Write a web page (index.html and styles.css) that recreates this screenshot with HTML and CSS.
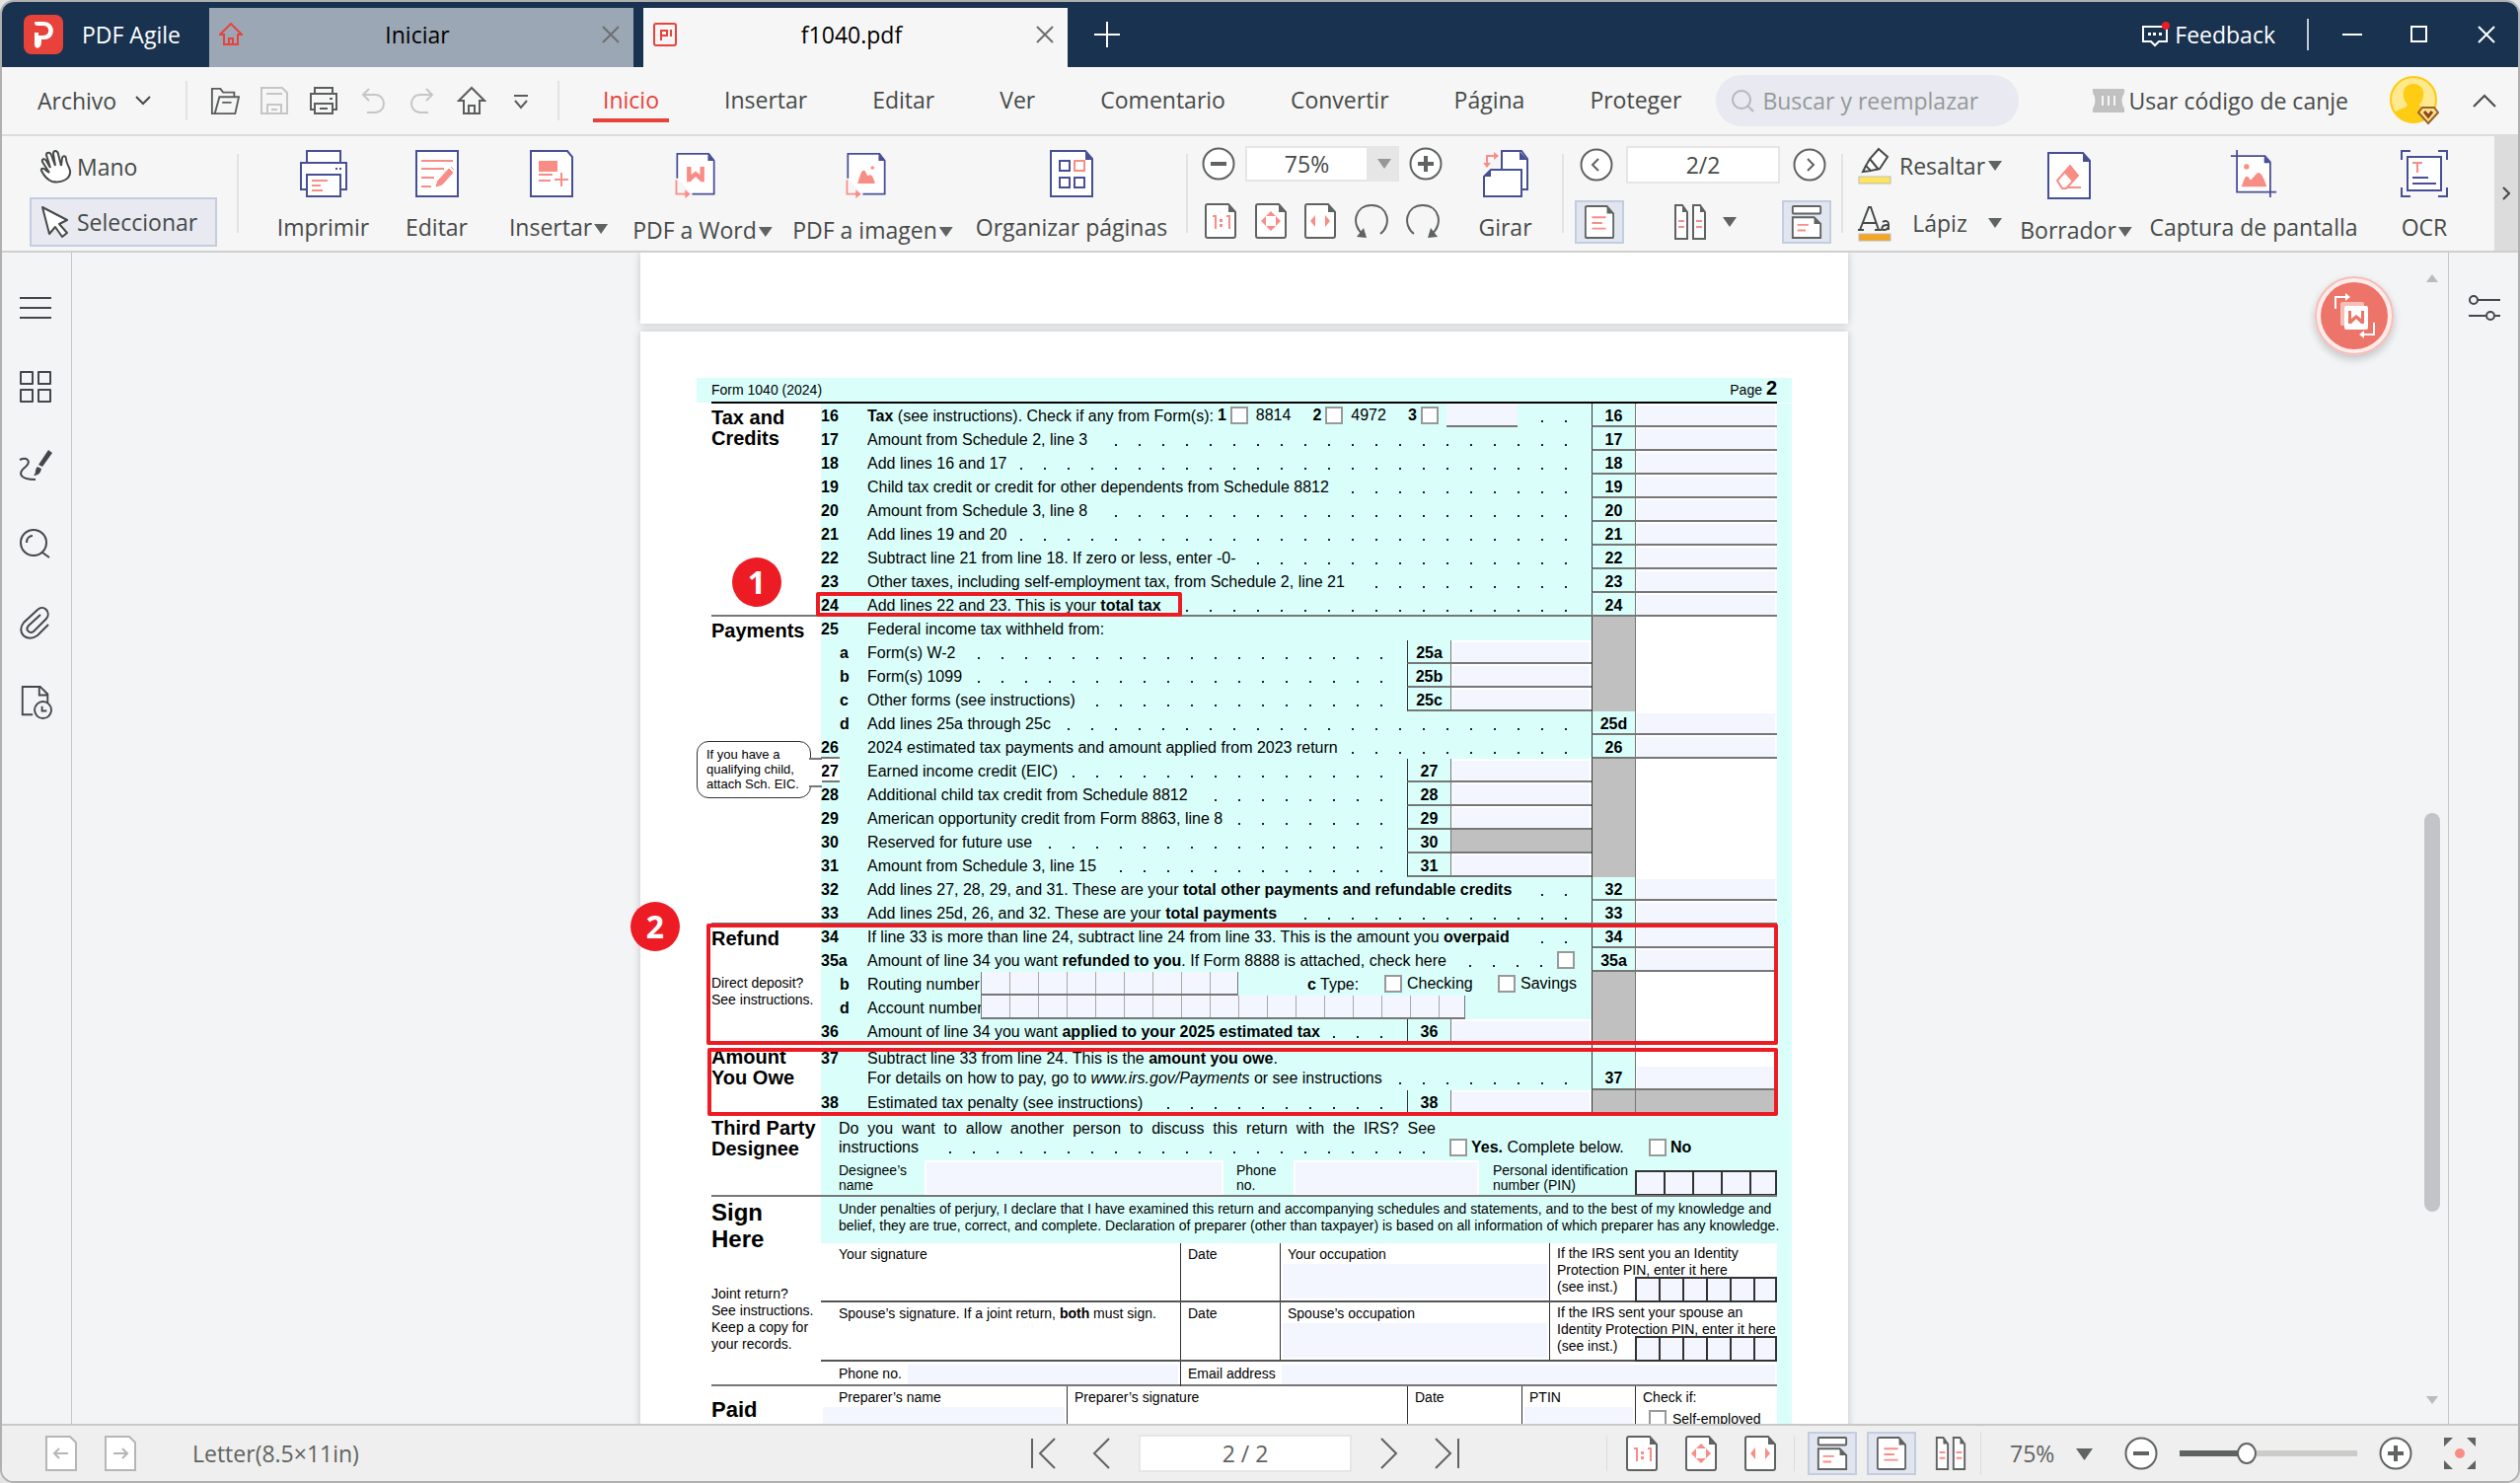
FILE: index.html
```html
<!DOCTYPE html>
<html lang="es">
<head>
  <meta charset="UTF-8">
  <title>PDF Agile - f1040.pdf</title>
  <meta name="viewport" content="width=device-width, initial-scale=1">
  <link rel="stylesheet" href="styles.css">
</head>
<body>
  <!-- icon set -->
  <svg class="sprite" aria-hidden="true">
    <symbol id="i-house" viewBox="0 0 30 30"><path d="M2 15 15 2l13 13h-5v13h-16V15zM12 28v-8h6v8" fill="none" stroke="currentColor" stroke-width="2"/></symbol>
    <symbol id="i-x" viewBox="0 0 18 18"><path d="M1 1l16 16M17 1 1 17" fill="none" stroke="currentColor" stroke-width="2"/></symbol>
    <symbol id="i-minus" viewBox="0 0 34 34"><circle cx="17" cy="17" r="15.500" fill="#fff" stroke="currentColor" stroke-width="2"/><path d="M9 17h16" stroke="currentColor" stroke-width="4"/></symbol>
    <symbol id="i-plus" viewBox="0 0 34 34"><circle cx="17" cy="17" r="15.500" fill="#fff" stroke="currentColor" stroke-width="2"/><path d="M9 17h16M17 9v16" stroke="currentColor" stroke-width="4"/></symbol>
    <symbol id="i-prev" viewBox="0 0 34 34"><circle cx="17" cy="17" r="15.500" fill="#fff" stroke="currentColor" stroke-width="2"/><path d="M19 11l-6 6 6 6" fill="none" stroke="currentColor" stroke-width="2"/></symbol>
    <symbol id="i-next" viewBox="0 0 34 34"><circle cx="17" cy="17" r="15.500" fill="#fff" stroke="currentColor" stroke-width="2"/><path d="M15 11l6 6-6 6" fill="none" stroke="currentColor" stroke-width="2"/></symbol>
    <symbol id="i-sheet" viewBox="0 0 32 36"><path d="M1 3q0-2 2-2h21l7 8v24q0 2-2 2H3q-2 0-2-2z" fill="#fff" stroke="currentColor" stroke-width="2"/><path d="M24 1v8h7z" fill="currentColor"/></symbol>
    <symbol id="i-actual" viewBox="0 0 32 36"><use href="#i-sheet"/><path d="M8 13h3v13M22 13h3v13" fill="none" stroke="#f98d86" stroke-width="2"/><path d="M15 16h3v3h-3zM15 21h3v3h-3z" fill="#f98d86"/></symbol>
    <symbol id="i-fitpage" viewBox="0 0 32 36"><use href="#i-sheet"/><path d="M16 8l5 5H11zM16 28l5-5H11zM6 18l5-5v10zM26 18l-5-5v10z" fill="#f98d86"/></symbol>
    <symbol id="i-fitwidth" viewBox="0 0 32 36"><use href="#i-sheet"/><path d="M6 18l5-6v12zM26 18l-5-6v12z" fill="#f98d86"/></symbol>
    <symbol id="i-single" viewBox="0 0 32 36"><use href="#i-sheet"/><path d="M8 13h15M8 19h11M8 25h15" stroke="#f98d86" stroke-width="2"/></symbol>
    <symbol id="i-facing" viewBox="0 0 32 36"><path d="M1 1h7l5 7v27H1zM19 1h7l5 7v27H19z" fill="#fff" stroke="currentColor" stroke-width="2"/><path d="M8 1v7h5zM26 1v7h5z" fill="currentColor"/><path d="M4 17h6M4 23h6M22 17h6M22 23h6" stroke="#f98d86" stroke-width="2"/></symbol>
    <symbol id="i-scroll" viewBox="0 0 32 36"><rect x="1" y="1" width="30" height="8" rx="1" fill="#fff" stroke="currentColor" stroke-width="2"/><path d="M1 13h23l7 7v15H1z" fill="#fff" stroke="currentColor" stroke-width="2"/><path d="M24 13v7h7z" fill="currentColor"/><path d="M6 21h12M6 27h9" stroke="#f98d86" stroke-width="2"/></symbol>
    <symbol id="i-rotate" viewBox="0 0 34 36"><path d="M8 31C-4 22 0 2 17 2s21 20 9 29" fill="none" stroke="currentColor" stroke-width="2"/><path d="M9 25l3 10-10-1z" fill="currentColor"/></symbol>
    <symbol id="i-bluepage" viewBox="0 0 46 48"><path d="M2 1h35l7 8v38H2z" fill="#fff" stroke="#474f95" stroke-width="2"/><path d="M37 1v9h7z" fill="#474f95"/></symbol>
    <symbol id="i-topage" viewBox="0 0 48 54"><path d="M3 30V2h36l6 8v38H20" fill="#fff" stroke="#474f95" stroke-width="2"/><path d="M38 2v8h7z" fill="#474f95"/><path d="M2 32v16h12" fill="none" stroke="#f98d86" stroke-width="2"/><path d="M12 43l6 5-6 5z" fill="#f98d86"/></symbol>
  </svg>

  <div class="window">
    <header class="titlebar">
      <svg class="logo" viewBox="0 0 40 40"><rect width="40" height="40" rx="8" fill="#e8433b"/><path d="M12 7h8c13 0 13 18 1 18h-3v2c0 9-8 8-7 2V18h4v3h5c7 0 7-10 0-10h-6c-3 0-4-4-2-4z" fill="#fff"/></svg>
      <span class="brand">PDF Agile</span>
      <div class="tab tab-home">
        <svg class="tab-icon" viewBox="0 0 24 24"><path d="M1 12 12 1l11 11h-4v10H5V12zM10 22v-6h4v6" fill="none" stroke="#e8433b" stroke-width="2"/></svg>
        <span class="tab-title">Iniciar</span>
        <button class="plain tab-close" aria-label="Cerrar Iniciar"><svg><use href="#i-x"/></svg></button>
      </div>
      <div class="tab tab-active">
        <svg class="tab-icon" viewBox="0 0 24 24"><rect x="1" y="1" width="22" height="22" rx="2" fill="none" stroke="#e8433b" stroke-width="2"/><path d="M8 18V8h6v5H9M18 7v7" fill="none" stroke="#e8433b" stroke-width="2"/></svg>
        <span class="tab-title">f1040.pdf</span>
        <button class="plain tab-close" aria-label="Cerrar f1040.pdf"><svg><use href="#i-x"/></svg></button>
      </div>
      <button class="plain new-tab" aria-label="Nueva pestaña"><svg viewBox="0 0 26 26"><path d="M0 13h26M13 0v26" stroke="#fff" stroke-width="2"/></svg></button>
      <div class="window-tools">
        <button class="plain feedback"><svg viewBox="0 0 28 26"><path d="M1 5h24v15h-8l-4 4-4-4H1z" fill="none" stroke="#fff" stroke-width="2"/><path d="M6 11h3v3H6zM11 11h3v3h-3zM17 11h3v3h-3z" fill="#fff"/><circle cx="24" cy="4" r="4" fill="#ee1c25"/></svg>Feedback</button>
        <span class="bar"></span>
        <button class="plain" aria-label="Minimizar"><svg viewBox="0 0 20 18"><path d="M0 9h20" stroke="#fff" stroke-width="2"/></svg></button>
        <button class="plain" aria-label="Maximizar"><svg viewBox="0 0 20 18"><rect x="2" y="1" width="15" height="15" fill="none" stroke="#fff" stroke-width="2"/></svg></button>
        <button class="plain" aria-label="Cerrar"><svg viewBox="0 0 18 18"><use href="#i-x"/></svg></button>
      </div>
    </header>

    <nav class="menubar">
      <button class="plain file-menu">Archivo <svg viewBox="0 0 16 10"><path d="M1 1l7 7 7-7" fill="none" stroke="currentColor" stroke-width="2"/></svg></button>
      <span class="divider"></span>
      <div class="quick">
        <button class="plain" aria-label="Abrir"><svg viewBox="0 0 32 30"><path d="M5 29H2V2h9l3 4h12v5M5 29l5-18h21l-4 18zM13 17h10" fill="none" stroke="currentColor" stroke-width="2"/></svg></button>
        <button class="plain off" aria-label="Guardar"><svg viewBox="0 0 30 30"><path d="M2 2h21l5 5v21H2zM7 8h16M8 28v-9h14v9M12 24h6" fill="none" stroke="currentColor" stroke-width="2"/></svg></button>
        <button class="plain" aria-label="Imprimir"><svg viewBox="0 0 30 30"><path d="M6 8V2h18v6M6 24H2V8h26v16h-4M6 18h18v10H6zM11 23h8M21 13h3" fill="none" stroke="currentColor" stroke-width="2"/></svg></button>
        <button class="plain off" aria-label="Deshacer"><svg viewBox="0 0 30 30"><path d="M11 3 5 9l6 6M5 9h12c12 0 12 18 0 18H9" fill="none" stroke="currentColor" stroke-width="2"/></svg></button>
        <button class="plain off" aria-label="Rehacer"><svg viewBox="0 0 30 30"><path d="M19 3l6 6-6 6M25 9H13C1 9 1 27 13 27h8" fill="none" stroke="currentColor" stroke-width="2"/></svg></button>
        <button class="plain" aria-label="Inicio"><svg><use href="#i-house"/></svg></button>
        <button class="plain" aria-label="Más"><svg viewBox="0 0 30 30"><path d="M8 10h14M9 15l6 7 6-7" fill="none" stroke="currentColor" stroke-width="2"/></svg></button>
      </div>
      <span class="divider"></span>
      <div class="menus">
        <a class="current" href="#inicio">Inicio</a>
        <a href="#insertar">Insertar</a>
        <a href="#editar">Editar</a>
        <a href="#ver">Ver</a>
        <a href="#comentario">Comentario</a>
        <a href="#convertir">Convertir</a>
        <a href="#pagina">Página</a>
        <a href="#proteger">Proteger</a>
      </div>
      <label class="search"><svg viewBox="0 0 24 24"><circle cx="11" cy="11" r="9" fill="none" stroke="currentColor" stroke-width="2"/><path d="M17 17l6 6" stroke="currentColor" stroke-width="2"/></svg><input type="text" placeholder="Buscar y reemplazar" aria-label="Buscar y reemplazar"></label>
      <div class="account">
        <button class="plain redeem"><svg viewBox="0 0 32 24"><path d="M0 0h32v4q-5 8 0 16v4H0v-4q5-8 0-16z" fill="#c1c1c1"/><path d="M10 7v10M16 7v10M22 7v10" stroke="#f6f6f6" stroke-width="2"/></svg>Usar código de canje</button>
        <button class="plain avatar" aria-label="Cuenta"><svg viewBox="0 0 50 50"><circle cx="24" cy="24" r="23" fill="#ffe98f" stroke="#ffca0a" stroke-width="2"/><path d="M24 8c13 0 12 16 6 21 1 4 9 4 13 8-10 14-29 14-38 0 4-4 12-4 13-8-6-5-7-21 6-21z" fill="#ffcc14"/><path d="M33 32h12l4 5-10 11-10-11z" fill="#ffdf8a" stroke="#9c6128" stroke-width="2"/><path d="M35 36l4 5 4-5" fill="none" stroke="#8b4a16" stroke-width="3"/></svg></button>
        <button class="plain collapse" aria-label="Contraer"><svg viewBox="0 0 24 14"><path d="M1 13 12 2l11 11" fill="none" stroke="currentColor" stroke-width="2"/></svg></button>
      </div>
    </nav>

    <section class="ribbon" aria-label="Herramientas">
      <div class="modes">
        <button class="mode"><svg viewBox="0 0 34 34"><path d="M13 32c-6-2-9-7-11-11-1-3 3-3 5 0l3 2L3 12c-1-3 2-4 4-1l4 7L7 5c0-3 4-3 5 0l4 11-2-12c0-4 4-4 5 0l3 12 1-8c1-3 4-2 4 1 0 5 3 7 4 12 1 8-8 13-18 11z" fill="#fff" stroke="currentColor" stroke-width="2"/></svg>Mano</button>
        <button class="mode selected"><svg viewBox="0 0 34 34"><path d="M3 2l25 13-8 4 8 9-5 4-7-10-6 7z" fill="#fff" stroke="currentColor" stroke-width="2" stroke-linejoin="round"/></svg>Seleccionar</button>
      </div>
      <span class="divider"></span>
      <button class="tool w-115"><svg viewBox="0 0 48 48"><path d="M7 13V1h34v12M8 40H1V13h46v27h-6" fill="#fff" stroke="#474f95" stroke-width="2"/><path d="M7 25h34v22H7z" fill="#fff" stroke="#474f95" stroke-width="2"/><path d="M36 19h2M40 19h2" stroke="#474f95" stroke-width="2"/><path d="M12 31h16M12 36h9M12 41h11" stroke="#f98d86" stroke-width="2"/></svg><span>Imprimir</span></button>
      <button class="tool w-115"><svg viewBox="0 0 46 48"><rect x="2" y="1" width="42" height="46" fill="#fff" stroke="#474f95" stroke-width="2"/><path d="M7 11h32M7 19h23M7 28h13M7 37h10" stroke="#f98d86" stroke-width="2"/><path d="M22 37l2-6 11-12 4 4-11 12zM37 17l3 3" fill="#f98d86" stroke="#f98d86"/></svg><span>Editar</span></button>
      <button class="tool menu w-132"><svg viewBox="0 0 46 48"><path d="M2 1h37l5 6v40H2z" fill="#fff" stroke="#474f95" stroke-width="2"/><path d="M10 11h19v11H10z" fill="#f98d86"/><path d="M10 25h14M10 31h12M26 30h14M33 23v14" stroke="#f98d86" stroke-width="2"/></svg><span>Insertar<i class="caret"></i></span></button>
      <button class="tool menu low w-160"><svg viewBox="0 0 48 54"><use href="#i-topage"/><path d="M14 17h5v9l5-4 5 4v-9h5v17h-4l-6-6-6 6h-4z" fill="#f98d86"/></svg><span>PDF a Word<i class="caret"></i></span></button>
      <button class="tool menu low w-185"><svg viewBox="0 0 48 54"><use href="#i-topage"/><path d="M14 36c2-6 4-15 7-15 3 0 3 6 5 6 4-3 6 2 8 9z" fill="#f98d86"/><circle cx="31" cy="18" r="2" fill="#f98d86"/></svg><span>PDF a imagen<i class="caret"></i></span></button>
      <button class="tool w-218"><svg viewBox="0 0 46 48"><use href="#i-bluepage"/><path d="M11 11h10v10H11zM11 28h10v10H11zM26 28h10v10H26z" fill="none" stroke="#474f95" stroke-width="2"/><path d="M26 11h10v10H26z" fill="none" stroke="#f98d86" stroke-width="2"/></svg><span>Organizar páginas</span></button>
      <span class="divider"></span>
      <div class="stack zoom">
        <div class="line">
          <button class="plain" aria-label="Alejar"><svg class="round"><use href="#i-minus"/></svg></button>
          <span class="pick"><select aria-label="Zoom"><option>75%</option><option>100%</option></select><i class="caret"></i></span>
          <button class="plain" aria-label="Acercar"><svg class="round"><use href="#i-plus"/></svg></button>
        </div>
        <div class="line">
          <button class="plain" aria-label="Tamaño real"><svg class="doc"><use href="#i-actual"/></svg></button>
          <button class="plain" aria-label="Ajustar página"><svg class="doc"><use href="#i-fitpage"/></svg></button>
          <button class="plain" aria-label="Ajustar ancho"><svg class="doc"><use href="#i-fitwidth"/></svg></button>
          <button class="plain" aria-label="Girar a la izquierda"><svg class="turn"><use href="#i-rotate"/></svg></button>
          <button class="plain" aria-label="Girar a la derecha"><svg class="turn mirror"><use href="#i-rotate"/></svg></button>
        </div>
      </div>
      <button class="tool w-115"><svg viewBox="0 0 48 48"><path d="M20 1h20l6 8v31H20z" fill="#fff" stroke="#474f95" stroke-width="2"/><path d="M38 1v9h8z" fill="#474f95"/><path d="M9 20h31v27H2V27z" fill="#fff" stroke="#474f95" stroke-width="2"/><path d="M9 20v7H2z" fill="#474f95"/><path d="M5 15V6h8" fill="none" stroke="#f98d86" stroke-width="2"/><path d="M12 2l5 4-5 4zM1 13l4 5 4-5z" fill="#f98d86"/></svg><span>Girar</span></button>
      <span class="divider"></span>
      <div class="stack pager">
        <div class="line">
          <button class="plain" aria-label="Página anterior"><svg class="round"><use href="#i-prev"/></svg></button>
          <input class="page-box" type="text" value="2/2" aria-label="Página">
          <button class="plain" aria-label="Página siguiente"><svg class="round"><use href="#i-next"/></svg></button>
        </div>
        <div class="line">
          <button class="toggle on" aria-label="Una página"><svg class="doc"><use href="#i-single"/></svg></button>
          <button class="plain facing" aria-label="Dos páginas"><svg class="doc"><use href="#i-facing"/></svg><i class="caret"></i></button>
          <button class="toggle on" aria-label="Desplazamiento"><svg class="doc"><use href="#i-scroll"/></svg></button>
        </div>
      </div>
      <span class="divider"></span>
      <div class="stack pens">
        <button class="pen"><svg viewBox="0 0 34 38"><path d="M21 2l9 8-8 12-9 2-5-5 4-7zM12 12l9 11M8 19l-3 6 8-1" fill="#fff" stroke="currentColor" stroke-width="2"/><rect x="1" y="30" width="32" height="7" fill="#ffe45c" stroke="#bbb"/></svg><span>Resaltar</span><i class="caret"></i></button>
        <button class="pen"><svg viewBox="0 0 34 38"><path d="M2 26 11 3h2l8 23M5 19h13M0 26h6M17 26h7M25 18c3-2 6-1 6 2v6M31 21c-8-1-8 6-4 5 2 0 4-2 4-4" fill="none" stroke="currentColor" stroke-width="2"/><rect x="1" y="30" width="32" height="7" fill="#f5a623" stroke="#bbb"/></svg><span>Lápiz</span><i class="caret"></i></button>
      </div>
      <button class="tool menu low w-132"><svg viewBox="0 0 46 48"><use href="#i-bluepage"/><path d="M11 29 24 14l8 10-12 13h-4z" fill="#fff" stroke="#f98d86" stroke-width="2"/><path d="M24 14l8 10-6 6-8-9z" fill="#f98d86"/><path d="M20 36h15" stroke="#f98d86" stroke-width="2"/></svg><span>Borrador<i class="caret"></i></span></button>
      <button class="tool capture w-218"><svg viewBox="0 0 52 54"><path d="M7 7h32l6 7v34H7z" fill="#fff"/><path d="M0 7h39l6 7v40M7 0v48h45" fill="none" stroke="#474f95" stroke-width="2"/><path d="M38 7v8h7z" fill="#474f95"/><circle cx="18" cy="19" r="3" fill="#f98d86"/><path d="M12 42c2-5 4-12 6-12 3 0 3 4 5 4 3-3 6-8 9-8 4 1 7 10 9 16z" fill="#f98d86"/></svg><span>Captura de pantalla</span></button>
      <button class="tool ocr"><svg viewBox="0 0 48 48"><path d="M1 10V1h9M38 1h9v9M47 38v9h-9M10 47H1v-9" fill="none" stroke="#474f95" stroke-width="2"/><rect x="7" y="7" width="34" height="34" fill="#fff" stroke="#474f95" stroke-width="2"/><path d="M12 13h10M17 13v10" stroke="#f98d86" stroke-width="2"/><path d="M12 28h16M12 34h24" stroke="#474f95" stroke-width="2"/></svg><span>OCR</span></button>
      <button class="plain more" aria-label="Más herramientas"><svg viewBox="0 0 8 14"><path d="M1 1l6 6-6 6" fill="none" stroke="currentColor" stroke-width="2"/></svg></button>
    </section>

    <main class="workspace">
      <aside class="rail">
        <button class="plain" aria-label="Marcadores"><svg viewBox="0 0 34 34"><path d="M1 7h32M1 17h32M1 27h32" stroke="currentColor" stroke-width="2"/></svg></button>
        <button class="plain" aria-label="Miniaturas"><svg viewBox="0 0 34 34"><path d="M2 2h12v12H2zM20 2h12v12H20zM2 20h12v12H2zM20 20h12v12H20z" fill="none" stroke="currentColor" stroke-width="2" stroke-linejoin="round"/></svg></button>
        <button class="plain" aria-label="Firmas"><svg viewBox="0 0 34 34"><path d="M1 11c9-4 11 3 6 7-8 6-7 13 10 13" fill="none" stroke="currentColor" stroke-width="2"/><path d="M30 1l4 3-10 14-4-2zM19 18l4 2c-1 5-4 7-8 7 3-2 1-7 4-9z" fill="currentColor"/></svg></button>
        <button class="plain" aria-label="Buscar"><svg viewBox="0 0 34 34"><circle cx="15" cy="15" r="13" fill="none" stroke="currentColor" stroke-width="2"/><path d="M24 25l7 5M8 15c0-5 3-7 6-7" fill="none" stroke="currentColor" stroke-width="2"/></svg></button>
        <button class="plain" aria-label="Adjuntos"><svg viewBox="0 0 34 34"><path d="M30 18 19 29C8 37-3 26 5 16L19 3c7-6 14 3 9 9L15 25c-4 3-9-2-5-6l12-11" fill="none" stroke="currentColor" stroke-width="2"/></svg></button>
        <button class="plain" aria-label="Historial"><svg viewBox="0 0 34 36"><path d="M14 31H3V1h19l8 8v9M21 1v9h9" fill="none" stroke="currentColor" stroke-width="2"/><circle cx="25" cy="26" r="9" fill="none" stroke="currentColor" stroke-width="2"/><path d="M24 22v5h5" fill="none" stroke="currentColor" stroke-width="2"/></svg></button>
      </aside>

      <div class="viewer">
        <div class="pages">
          <div class="page page-end"></div>
          <article class="page sheet" lang="en">
            <div class="form">
              <div class="form-head"><span>Form 1040 (2024)</span><span>Page <b class="big">2</b></span></div>

              <section class="part">
                <h2>Tax and<br>Credits</h2>
                <div class="rows">
                  <div class="row"><span class="no">16</span><div class="desc"><span><b>Tax</b> (see instructions). Check if any from Form(s):</span><label class="tick"><b>1</b><input type="checkbox">8814</label><label class="tick"><b>2</b><input type="checkbox">4972</label><label class="tick"><b>3</b><input type="checkbox"></label><input class="other" type="text" aria-label="Otro formulario"><span class="dots"></span></div><label class="box" for="l16">16</label><input class="amt" id="l16" type="text"></div>
                  <div class="row"><span class="no">17</span><div class="desc"><span>Amount from Schedule 2, line 3</span><span class="dots"></span></div><label class="box" for="l17">17</label><input class="amt" id="l17" type="text"></div>
                  <div class="row"><span class="no">18</span><div class="desc"><span>Add lines 16 and 17</span><span class="dots"></span></div><label class="box" for="l18">18</label><input class="amt" id="l18" type="text"></div>
                  <div class="row"><span class="no">19</span><div class="desc"><span>Child tax credit or credit for other dependents from Schedule 8812</span><span class="dots"></span></div><label class="box" for="l19">19</label><input class="amt" id="l19" type="text"></div>
                  <div class="row"><span class="no">20</span><div class="desc"><span>Amount from Schedule 3, line 8</span><span class="dots"></span></div><label class="box" for="l20">20</label><input class="amt" id="l20" type="text"></div>
                  <div class="row"><span class="no">21</span><div class="desc"><span>Add lines 19 and 20</span><span class="dots"></span></div><label class="box" for="l21">21</label><input class="amt" id="l21" type="text"></div>
                  <div class="row"><span class="no">22</span><div class="desc"><span>Subtract line 21 from line 18. If zero or less, enter -0-</span><span class="dots"></span></div><label class="box" for="l22">22</label><input class="amt" id="l22" type="text"></div>
                  <div class="row"><span class="no">23</span><div class="desc"><span>Other taxes, including self-employment tax, from Schedule 2, line 21</span><span class="dots"></span></div><label class="box" for="l23">23</label><input class="amt" id="l23" type="text"></div>
                  <div class="row"><span class="no">24</span><div class="desc"><span>Add lines 22 and 23. This is your <b>total tax</b></span><span class="dots"></span></div><label class="box" for="l24">24</label><input class="amt" id="l24" type="text"></div>
                </div>
              </section>

              <section class="part">
                <div class="side">
                  <h2>Payments</h2>
                  <p class="callout">If you have a qualifying child, attach Sch. EIC.</p>
                </div>
                <div class="rows">
                  <div class="row"><span class="no">25</span><div class="desc">Federal income tax withheld from:</div><span class="box gray"></span><span class="amt blank"></span></div>
                  <div class="row"><span class="no sub">a</span><div class="desc"><span>Form(s) W-2</span><span class="dots"></span></div><label class="box" for="l25a">25a</label><input class="amt inner" id="l25a" type="text"><span class="box gray"></span><span class="amt blank"></span></div>
                  <div class="row"><span class="no sub">b</span><div class="desc"><span>Form(s) 1099</span><span class="dots"></span></div><label class="box" for="l25b">25b</label><input class="amt inner" id="l25b" type="text"><span class="box gray"></span><span class="amt blank"></span></div>
                  <div class="row"><span class="no sub">c</span><div class="desc"><span>Other forms (see instructions)</span><span class="dots"></span></div><label class="box" for="l25c">25c</label><input class="amt inner" id="l25c" type="text"><span class="box gray"></span><span class="amt blank"></span></div>
                  <div class="row"><span class="no sub">d</span><div class="desc"><span>Add lines 25a through 25c</span><span class="dots"></span></div><label class="box" for="l25d">25d</label><input class="amt" id="l25d" type="text"></div>
                  <div class="row"><span class="no">26</span><div class="desc"><span>2024 estimated tax payments and amount applied from 2023 return</span><span class="dots"></span></div><label class="box" for="l26">26</label><input class="amt" id="l26" type="text"></div>
                  <div class="row"><span class="no"><span class="tag">27</span></span><div class="desc"><span>Earned income credit (EIC)</span><span class="dots"></span></div><label class="box" for="l27">27</label><input class="amt inner" id="l27" type="text"><span class="box gray"></span><span class="amt blank"></span></div>
                  <div class="row"><span class="no">28</span><div class="desc"><span>Additional child tax credit from Schedule 8812</span><span class="dots"></span></div><label class="box" for="l28">28</label><input class="amt inner" id="l28" type="text"><span class="box gray"></span><span class="amt blank"></span></div>
                  <div class="row"><span class="no">29</span><div class="desc"><span>American opportunity credit from Form 8863, line 8</span><span class="dots"></span></div><label class="box" for="l29">29</label><input class="amt inner" id="l29" type="text"><span class="box gray"></span><span class="amt blank"></span></div>
                  <div class="row"><span class="no">30</span><div class="desc"><span>Reserved for future use</span><span class="dots"></span></div><span class="box">30</span><span class="amt inner reserved"></span><span class="box gray"></span><span class="amt blank"></span></div>
                  <div class="row"><span class="no">31</span><div class="desc"><span>Amount from Schedule 3, line 15</span><span class="dots"></span></div><label class="box" for="l31">31</label><input class="amt inner" id="l31" type="text"><span class="box gray"></span><span class="amt blank"></span></div>
                  <div class="row"><span class="no">32</span><div class="desc"><span>Add lines 27, 28, 29, and 31. These are your <b>total other payments and refundable credits</b></span><span class="dots"></span></div><label class="box" for="l32">32</label><input class="amt" id="l32" type="text"></div>
                  <div class="row"><span class="no">33</span><div class="desc"><span>Add lines 25d, 26, and 32. These are your <b>total payments</b></span><span class="dots"></span></div><label class="box" for="l33">33</label><input class="amt" id="l33" type="text"></div>
                </div>
              </section>

              <section class="part">
                <div class="side">
                  <h2>Refund</h2>
                  <p class="note deposit">Direct deposit?<br>See instructions.</p>
                </div>
                <div class="rows">
                  <div class="row"><span class="no">34</span><div class="desc"><span>If line 33 is more than line 24, subtract line 24 from line 33. This is the amount you <b>overpaid</b></span><span class="dots"></span></div><label class="box" for="l34">34</label><input class="amt" id="l34" type="text"></div>
                  <div class="row"><span class="no">35a</span><div class="desc"><label for="f8888">Amount of line 34 you want <b>refunded to you</b>. If Form 8888 is attached, check here</label><span class="dots short"></span><input class="last-check" type="checkbox" id="f8888"></div><label class="box" for="l35">35a</label><input class="amt" id="l35" type="text"></div>
                  <div class="row"><span class="no sub">b</span><div class="desc"><label class="bank" for="routing">Routing number</label><input class="comb comb-9" id="routing" type="text"><span class="type"><b>c</b> Type:</span><label class="kind"><input type="checkbox">Checking</label><label class="kind"><input type="checkbox">Savings</label></div><span class="box gray"></span><span class="amt blank"></span></div>
                  <div class="row"><span class="no sub">d</span><div class="desc"><label class="bank" for="account">Account number</label><input class="comb comb-17" id="account" type="text"></div><span class="box gray"></span><span class="amt blank"></span></div>
                  <div class="row"><span class="no">36</span><div class="desc"><span>Amount of line 34 you want <b>applied to your 2025 estimated tax</b></span><span class="dots"></span></div><label class="box" for="l36">36</label><input class="amt inner" id="l36" type="text"><span class="box gray"></span><span class="amt blank"></span></div>
                </div>
              </section>

              <section class="part">
                <h2>Amount<br>You Owe</h2>
                <div class="rows">
                  <div class="row tall"><span class="no">37</span><div class="desc two"><span>Subtract line 33 from line 24. This is the <b>amount you owe</b>.</span><div class="desc-line"><span>For details on how to pay, go to <em>www.irs.gov/Payments</em> or see instructions</span><span class="dots"></span></div></div><label class="box" for="l37">37</label><input class="amt" id="l37" type="text"></div>
                  <div class="row"><span class="no">38</span><div class="desc"><span>Estimated tax penalty (see instructions)</span><span class="dots"></span></div><label class="box" for="l38">38</label><input class="amt inner" id="l38" type="text"><span class="box gray"></span><span class="amt blank gray"></span></div>
                </div>
              </section>

              <section class="part">
                <h2>Third Party<br>Designee</h2>
                <div class="rows designee">
                  <p class="ask">Do you want to allow another person to discuss this return with the IRS? See</p>
                  <div class="answer"><span>instructions</span><span class="dots"></span><label class="yes"><input type="checkbox"><span><b>Yes.</b> Complete below.</span></label><label class="no-box"><input type="checkbox"><b>No</b></label></div>
                  <div class="contact">
                    <label for="dname">Designee’s name</label><input class="field" id="dname" type="text">
                    <label for="dphone">Phone<br>no.</label><input class="field" id="dphone" type="text">
                    <label for="dpin">Personal identification number (PIN)</label><input class="pin pin-5" id="dpin" type="text">
                  </div>
                </div>
              </section>

              <section class="part">
                <div class="side">
                  <h2 class="large">Sign<br>Here</h2>
                  <p class="note joint">Joint return?<br>See instructions.<br>Keep a copy for<br>your records.</p>
                </div>
                <div class="rows">
                  <p class="oath">Under penalties of perjury, I declare that I have examined this return and accompanying schedules and statements, and to the best of my knowledge and<br>belief, they are true, correct, and complete. Declaration of preparer (other than taxpayer) is based on all information of which preparer has any knowledge.</p>
                  <div class="sign">
                    <div class="cell first">Your signature</div>
                    <div class="cell">Date</div>
                    <div class="cell"><label for="occ1">Your occupation</label><input class="fill" id="occ1" type="text"></div>
                    <div class="cell ip"><label for="ip1">If the IRS sent you an Identity<br>Protection PIN, enter it here<br>(see inst.)</label><input class="pin pin-6" id="ip1" type="text"></div>
                  </div>
                  <div class="sign">
                    <div class="cell first"><span>Spouse’s signature. If a joint return, <b>both</b> must sign.</span></div>
                    <div class="cell">Date</div>
                    <div class="cell"><label for="occ2">Spouse’s occupation</label><input class="fill" id="occ2" type="text"></div>
                    <div class="cell ip"><label for="ip2">If the IRS sent your spouse an<br>Identity Protection PIN, enter it here<br>(see inst.)</label><input class="pin pin-6" id="ip2" type="text"></div>
                  </div>
                  <div class="reach">
                    <div class="cell first"><label for="ph">Phone no.</label><input id="ph" type="text"></div>
                    <div class="cell"><label for="em">Email address</label><input id="em" type="text"></div>
                  </div>
                </div>
              </section>

              <section class="part">
                <h2 class="paid">Paid</h2>
                <div class="rows preparer">
                  <div class="cell first"><label for="pn">Preparer’s name</label><input class="fill" id="pn" type="text"></div>
                  <div class="cell">Preparer’s signature</div>
                  <div class="cell">Date</div>
                  <div class="cell"><label for="ptin">PTIN</label><input class="fill" id="ptin" type="text"></div>
                  <div class="cell">Check if:<label class="self"><input type="checkbox">Self-employed</label></div>
                </div>
              </section>
            </div>

            <!-- review marks drawn over the form -->
            <span class="mark mark-total"></span>
            <span class="mark mark-refund"></span>
            <span class="mark mark-owe"></span>
            <span class="badge badge-1">1</span>
            <span class="badge badge-2">2</span>
          </article>
        </div>
        <div class="scrollbar">
          <i class="arrow up"></i>
          <i class="thumb"></i>
          <i class="arrow down"></i>
        </div>
        <button class="plain convert" aria-label="Convertir a Word"><svg viewBox="0 0 80 80"><circle cx="40" cy="40" r="39" fill="#fdeceb" stroke="#f8bdb7" stroke-width="2"/><circle cx="40" cy="40" r="34" fill="#ed7469"/><path d="M21 33V21h10M60 47v12H50" fill="none" stroke="#fff" stroke-width="2"/><path d="M31 17l5 4-5 4zM50 55l-5 4 5 4z" fill="#fff"/><rect x="26" y="26" width="24" height="24" rx="2" fill="#f8bdb7"/><rect x="30" y="30" width="24" height="24" rx="2" fill="#fff"/><path d="M34 35h3v8l5-4 5 4v-8h3v13h-3l-5-5-5 5h-3z" fill="#ed7469"/></svg></button>
      </div>

      <aside class="rail rail-right">
        <button class="plain" aria-label="Propiedades"><svg viewBox="0 0 34 34"><path d="M10 9h23M1 25h17M28 25h5" stroke="currentColor" stroke-width="2"/><circle cx="6" cy="9" r="4" fill="none" stroke="currentColor" stroke-width="2"/><circle cx="23" cy="25" r="4" fill="none" stroke="currentColor" stroke-width="2"/></svg></button>
      </aside>
    </main>

    <footer class="statusbar">
      <button class="plain off" aria-label="Vista anterior"><svg class="doc" viewBox="0 0 32 36"><path d="M1 1h24l6 6v28H1z" fill="#fff" stroke="currentColor" stroke-width="2"/><path d="M9 18h14M14 13l-5 5 5 5" fill="none" stroke="currentColor" stroke-width="2"/></svg></button>
      <button class="plain off next-view" aria-label="Vista siguiente"><svg class="doc" viewBox="0 0 32 36"><path d="M1 1h24l6 6v28H1z" fill="#fff" stroke="currentColor" stroke-width="2"/><path d="M9 18h14M18 13l5 5-5 5" fill="none" stroke="currentColor" stroke-width="2"/></svg></button>
      <span class="paper">Letter(8.5×11in)</span>
      <div class="page-nav">
        <button class="plain" aria-label="Primera página"><svg viewBox="0 0 26 32"><path d="M1 1v30M24 1 9 16l15 15" fill="none" stroke="currentColor" stroke-width="2"/></svg></button>
        <button class="plain" aria-label="Anterior"><svg viewBox="0 0 26 32"><path d="M20 1 5 16l15 15" fill="none" stroke="currentColor" stroke-width="2"/></svg></button>
        <input class="page-box wide" type="text" value="2 / 2" aria-label="Número de página">
        <button class="plain" aria-label="Siguiente"><svg viewBox="0 0 26 32"><path d="M6 1l15 15L6 31" fill="none" stroke="currentColor" stroke-width="2"/></svg></button>
        <button class="plain" aria-label="Última página"><svg viewBox="0 0 26 32"><path d="M25 1v30M2 1l15 15L2 31" fill="none" stroke="currentColor" stroke-width="2"/></svg></button>
      </div>
      <div class="fits">
        <button class="plain" aria-label="Tamaño real"><svg class="doc"><use href="#i-actual"/></svg></button>
        <button class="plain" aria-label="Ajustar página"><svg class="doc"><use href="#i-fitpage"/></svg></button>
        <button class="plain" aria-label="Ajustar ancho"><svg class="doc"><use href="#i-fitwidth"/></svg></button>
      </div>
      <div class="views">
        <button class="toggle on" aria-label="Desplazamiento"><svg class="doc"><use href="#i-scroll"/></svg></button>
        <button class="toggle on" aria-label="Una página"><svg class="doc"><use href="#i-single"/></svg></button>
        <button class="toggle" aria-label="Dos páginas"><svg class="doc"><use href="#i-facing"/></svg></button>
      </div>
      <div class="scale">
        <span class="pick flat"><select aria-label="Nivel de zoom"><option>75%</option><option>100%</option></select><i class="caret"></i></span>
        <button class="plain" aria-label="Alejar"><svg class="round"><use href="#i-minus"/></svg></button>
        <input class="slider" type="range" min="0" max="100" value="36" aria-label="Zoom">
        <button class="plain" aria-label="Acercar"><svg class="round"><use href="#i-plus"/></svg></button>
        <button class="plain full" aria-label="Pantalla completa"><svg viewBox="0 0 32 32"><path d="M0 0h9L0 9zM32 0v9l-9-9zM0 32v-9l9 9zM32 32h-9l9-9z" fill="currentColor"/><circle cx="16" cy="16" r="5" fill="#f98d86"/></svg></button>
      </div>
    </footer>
  </div>
</body>
</html>
```
FILE: styles.css
```css
* { box-sizing: border-box; }
body { margin: 0; background: #e4e4e4; font-family: "Open Sans", sans-serif; font-size: 23px; color: #464a48; }
button, input, select { font: inherit; color: inherit; }
button { cursor: pointer; }
svg { display: block; flex: none; }
p, h2 { margin: 0; }
.sprite { position: absolute; width: 0; height: 0; }
.window { display: flex; flex-direction: column; height: 100vh; border: 2px solid #b0b0b0; border-radius: 14px; overflow: hidden; background: #f6f6f6; }
.plain { background: none; border: none; padding: 0; display: flex; align-items: center; white-space: nowrap; }
.off { color: #c6c6c6; }
.caret { flex: none; width: 14px; height: 10px; background: #5f6361; clip-path: polygon(0 0, 100% 0, 50% 100%); }
.divider { flex: none; width: 2px; background: #e3e3e3; }

/* title bar */
.titlebar { flex: none; display: flex; align-items: center; height: 66px; padding-right: 22px; background: #18324f; color: #fff; }
.logo { width: 40px; height: 40px; margin-left: 22px; }
.brand { width: 129px; margin-left: 19px; white-space: nowrap; }
.tab { display: flex; align-items: center; align-self: flex-end; flex: none; width: 430px; height: 60px; padding: 0 14px 6px 10px; background: #9ca7b5; color: #000; }
.tab-active { margin-left: 10px; background: #f6f6f6; }
.tab-icon { width: 24px; height: 24px; }
.tab-title { flex: 1; text-align: center; }
.tab-close { padding-left: 10px; color: #6d6f6e; }
.tab-close svg { width: 18px; height: 18px; }
.new-tab { margin-left: 27px; }
.new-tab svg { width: 26px; height: 26px; }
.window-tools { display: flex; align-items: center; gap: 48px; margin-left: auto; }
.window-tools svg { width: 20px; height: 18px; }
.window-tools .feedback { gap: 5px; margin-right: -16px; }
.window-tools .feedback svg { width: 28px; height: 26px; }
.bar { width: 2px; height: 32px; margin-right: -14px; background: #c5c9ce; }

/* menu row */
.menubar { flex: none; display: flex; align-items: center; height: 70px; border-bottom: 2px solid #dcdcdc; }
.menubar .divider { height: 40px; }
.file-menu { gap: 19px; width: 186px; padding-left: 36px; }
.file-menu svg { width: 16px; height: 10px; }
.quick { display: flex; gap: 20px; width: 375px; padding-left: 23px; color: #5a5e5c; }
.quick svg { width: 30px; height: 30px; }
.quick .off { color: #c6c6c6; }
.menus { display: flex; align-self: stretch; align-items: center; gap: 46px; padding-left: 34px; }
.menus a { padding: 5px 10px 3px; line-height: 32px; border-bottom: 4px solid transparent; color: inherit; text-decoration: none; }
.menus .current { color: #e8433b; border-color: #e8433b; }
.search { display: flex; align-items: center; gap: 8px; width: 307px; height: 52px; margin-left: 25px; padding: 0 15px; border-radius: 26px; background: #e8e9f1; color: #b5b7b9; }
.search svg { width: 24px; height: 24px; }
.search input { width: 230px; border: none; background: none; padding: 0; }
.search input::placeholder { color: #959998; }
.account { display: flex; align-items: center; margin-left: auto; padding-right: 22px; }
.redeem { gap: 5px; }
.redeem svg { width: 32px; height: 24px; }
.avatar { margin-left: 42px; }
.avatar svg { width: 50px; height: 50px; }
.collapse { margin-left: 34px; }
.collapse svg { width: 24px; height: 14px; }

/* ribbon */
.ribbon { flex: none; display: flex; align-items: stretch; height: 118px; border-bottom: 2px solid #cfcfcf; box-shadow: 0 2px 3px #0002; }
.ribbon .divider { margin: 18px 0; }
.modes { display: flex; flex-direction: column; gap: 8px; width: 238px; padding: 8px 20px 4px 28px; }
.mode { display: flex; align-items: center; gap: 4px; width: 190px; height: 46px; padding: 0 8px; background: none; border: 2px solid transparent; white-space: nowrap; }
.mode svg { width: 34px; height: 34px; }
.mode.selected { height: 50px; background: #e8e9f1; border-color: #c3cddf; }
.tool { flex: none; display: flex; flex-direction: column; align-items: center; justify-content: space-between; padding: 14px 0 8px; background: none; border: none; line-height: 32px; white-space: nowrap; }
.tool svg { width: 48px; height: 48px; }
.tool span { display: flex; align-items: center; }
.tool.menu svg { margin-right: 14px; }
.tool.low { padding: 16px 0 5px; }
.tool .caret { margin: 4px 0 0 2px; }
.modes + .divider + .tool { margin-left: 28px; }
.w-115 { width: 115px; }
.w-132 { width: 132px; }
.w-160 { width: 160px; }
.w-185 { width: 185px; }
.w-218 { width: 218px; }
.ribbon .w-218 + .divider { margin-left: 7px; }
.stack { flex: none; display: flex; flex-direction: column; justify-content: space-between; padding: 10px 0 7px; }
.line { display: flex; align-items: center; justify-content: space-between; }
.round { width: 34px; height: 34px; color: #5f6361; }
.doc { width: 32px; height: 36px; color: #5f6361; }
.turn { width: 34px; height: 36px; color: #5f6361; }
.off .doc { color: #b5b7b6; }
.mirror { transform: scaleX(-1); }
.zoom { width: 244px; margin-left: 14px; padding-bottom: 12px; }
.zoom .line + .line { padding: 0 3px; }
.pick { position: relative; display: flex; }
.pick select { appearance: none; width: 156px; height: 36px; border: 2px solid #e6e6e6; padding: 0 31px 0 0; text-align-last: center; background: linear-gradient(to left, #e6e6e6 31px, #fff 31px); }
.pick .caret { position: absolute; right: 8px; top: 13px; opacity: .6; }
.ribbon .zoom + .tool { margin-left: 6px; }
.pager { width: 271px; padding-left: 11px; }
.pager .line:first-child { padding: 0 5px; }
.page-box { width: 156px; height: 38px; border: 2px solid #e6e6e6; background: #fff; text-align: center; padding: 0; }
.facing { gap: 17px; margin-left: 5px; }
.toggle { display: flex; align-items: center; justify-content: center; width: 50px; height: 44px; padding: 0; background: none; border: 2px solid transparent; }
.toggle.on { background: #e1e5f0; border-color: #c3cddf; }
.toggle .doc { height: 34px; }
.pager + .divider { margin-left: 10px; }
.pens { width: 170px; padding: 8px 0 6px 15px; }
.pen { display: flex; align-items: center; gap: 8px; height: 44px; padding: 0; background: none; border: none; }
.pen svg { width: 34px; height: 38px; }
.pen span { width: 82px; text-align: center; }
.capture { margin-left: 5px; }
.ocr { width: 84px; margin-left: 22px; }
.more { width: 24px; margin-left: auto; justify-content: center; background: #dcdcdc; }
.more svg { width: 8px; height: 14px; }

/* work area */
.workspace { flex: 1; display: flex; min-height: 0; background: #f3f4f6; }
.rail { flex: none; width: 71px; padding-top: 16px; border-right: 1px solid #c4c6c8; color: #45464b; }
.rail .plain { width: 100%; height: 80px; padding-left: 17px; }
.rail svg { width: 34px; height: 34px; }
.rail-right { border-right: none; border-left: 1px solid #c4c6c8; }
.rail-right .plain { padding-left: 19px; }
.viewer { position: relative; flex: 1; display: flex; overflow: hidden; }
.pages { flex: 1; display: flex; flex-direction: column; align-items: center; gap: 8px; overflow: hidden; }
.page { flex: none; width: 1224px; background: #fff; box-shadow: 0 0 8px #0003; }
.page-end { height: 72px; }
.sheet { position: relative; min-height: 1200px; padding: 48px 72px 0; font-family: "Liberation Sans", Arial, sans-serif; font-size: 16px; line-height: 24px; color: #000; }
.scrollbar { flex: none; display: flex; flex-direction: column; align-items: center; width: 32px; padding: 22px 0 20px; }
.arrow { width: 12px; height: 8px; background: #bbb; }
.up { clip-path: polygon(50% 0, 100% 100%, 0 100%); }
.down { clip-path: polygon(0 0, 100% 0, 50% 100%); }
.thumb { width: 16px; height: 404px; margin: auto 0 187px; border-radius: 8px; background: #c2c4c7; }
.convert { position: absolute; top: 24px; right: 55px; border-radius: 40px; box-shadow: 0 4px 8px #0003; }
.convert svg { width: 80px; height: 80px; }

/* tax form */
.form { display: flex; flex-direction: column; }
.form input { border-radius: 0; padding: 0; }
.form input[type="checkbox"] { appearance: none; flex: none; width: 18px; height: 18px; margin: 0; border: 2px solid #999; background: #fff; }
.form-head { display: flex; justify-content: space-between; align-items: flex-end; height: 25px; border-bottom: 2px solid #000; background: #dafffb; box-shadow: -15px -1px #dafffb, 15px -1px #dafffb; font-size: 14px; line-height: 23px; }
.big { font-size: 20px; }
.part { display: grid; grid-template-columns: 111px 1fr; }
.part + .part { margin-top: -2px; border-top: 2px solid #777; }
.part h2 { padding-top: 4px; font-size: 20px; line-height: 21px; white-space: nowrap; }
.part h2.large { padding-top: 2px; font-size: 24px; line-height: 27px; }
.part h2.paid { padding-top: 10px; font-size: 22px; line-height: 27px; }
.note { font-size: 14px; line-height: 17px; white-space: nowrap; }
.deposit { margin-top: 26px; }
.joint { margin-top: 34px; }
.callout { position: relative; width: 116px; margin: 101px 0 0 -15px; padding: 5px 4px 6px 9px; border: 1px solid #333; border-radius: 12px; font-size: 13px; line-height: 15px; }
.callout::after { content: ""; position: absolute; top: 16px; right: -12px; width: 13px; height: 26px; background: #fff; border: solid #777; border-width: 2px 0; }
.rows { background: #dafffb; box-shadow: 15px 0 #dafffb; min-width: 0; }
.row { display: flex; height: 24px; line-height: 26px; white-space: nowrap; }
.no { flex: none; width: 47px; font-weight: bold; }
.sub { padding-left: 19px; }
.tag { display: block; width: 19px; height: 26px; margin-top: -2px; background: #fff; border: solid #777; border-width: 2px 0; }
.desc { flex: 1; display: flex; min-width: 0; }
.dots { flex: 1; height: 24px; margin: 0 25px 0 10px; background: repeating-linear-gradient(to left, #222 0 2px, transparent 2px 24px) 0 17px / 100% 2px no-repeat; }
.box { flex: none; width: 44px; border-left: 1px solid #333; border-bottom: 2px solid #777; font-weight: bold; text-align: center; }
.amt { flex: none; width: 144px; border: solid #777; border-width: 0 0 2px 1px; background: #f3f6fe; box-shadow: inset 1px 2px #fff, inset -2px 0 #fff; }
.amt.inner { width: 143px; }
.gray, .reserved { background: #c0c0c0; box-shadow: none; }
.box.gray, .blank { border-bottom: none; }
.blank:not(.gray) { background: #fff; }
.tick { display: flex; align-items: center; margin-left: 22px; }
.tick:nth-of-type(1) { margin-left: 4px; }
.form .tick input { margin: 0 8px 0 4px; }
.other { flex: none; width: 72px; border: solid #777; border-width: 0 0 2px; background: #f3f6fe; }
.desc .short { margin-right: 15px; }
.form .desc .last-check { margin: 3px 17px 0 0; }
.bank { flex: none; width: 115px; }
.form .comb { flex: none; height: 24px; border: solid #777; border-width: 0 1px 2px; background: repeating-linear-gradient(to right, #f3f6fe 0 28px, #a9a9a9 28px 29px); }
.comb-9 { width: 261px; }
.comb-17 { width: 491px; }
.type { flex: none; width: 78px; margin-left: 70px; }
.kind { flex: none; display: flex; align-items: center; gap: 5px; width: 115px; }
.kind + .kind { width: auto; }
.tall { height: 48px; }
.two { flex-direction: column; padding-top: 6px; line-height: 20px; }
.desc-line { display: flex; }
.desc-line .dots { height: 20px; background-position: 0 14px; }
.tall .no { padding-top: 3px; }
.tall .box { padding-top: 23px; }
.tall .amt { box-shadow: inset 1px 24px #fff, inset -2px 0 #fff; }
.designee { padding: 6px 0 0 18px; height: 84px; }
.ask { width: 605px; line-height: 18px; text-align-last: justify; white-space: nowrap; }
.answer { display: flex; align-items: center; height: 20px; line-height: 18px; margin-bottom: 3px; }
.answer .dots { margin: 0 25px 0 24px; height: 20px; background-position: 0 14px; }
.yes, .no-box { display: flex; align-items: center; gap: 4px; width: 202px; }
.no-box { width: 130px; }
.contact { display: grid; grid-template-columns: 87px 303px 13px 58px 188px 14px 144px 144px; align-items: end; font-size: 14px; line-height: 15px; }
.contact label { align-self: center; }
.contact label:nth-of-type(2) { grid-column: 4; }
.contact label:nth-of-type(3) { grid-column: 7; width: 144px; }
.field { width: 100%; height: 36px; border: 2px solid #fff; background: #f3f6fe; }
.pin { width: 144px; height: 26px; border: 2px solid #333; }
.pin-5 { background: repeating-linear-gradient(to right, #f3f6fe 0 27px, #333 27px 29px); }
.pin-6 { background: repeating-linear-gradient(to right, #f3f6fe 0 22px, #333 22px 24px); }
.oath { height: 47px; padding: 4px 0 0 18px; font-size: 14px; line-height: 17px; white-space: nowrap; }
.sign, .reach, .preparer { display: grid; background: #fff; font-size: 14px; line-height: 17px; white-space: nowrap; }
.sign { grid-template-columns: 364px 101px 273px 1fr; height: 60px; border-bottom: 2px solid #555; }
.reach { grid-template-columns: 364px 1fr; height: 25px; }
.preparer { grid-template-columns: 249px 345px 116px 115px 1fr; height: 100px; }
.cell { position: relative; display: flex; flex-direction: column; padding: 3px 2px 2px 7px; border-left: 1px solid #333; min-width: 0; }
.first { padding-left: 18px; border-left: none; }
.fill { flex: 1; width: auto; margin: 1px 0 0 -5px; border: none; background: #f3f6fe; min-height: 0; }
.first .fill { margin-left: -16px; }
.cell.ip { padding: 2px 0 0 7px; }
.ip .pin { position: absolute; right: 0; bottom: -2px; }
.reach .cell { flex-direction: row; gap: 6px; line-height: 19px; }
.reach input { flex: 1; border: none; background: #f3f6fe; }
.self { display: flex; align-items: center; gap: 6px; padding: 4px 0 0 6px; }

/* review marks */
.mark { position: absolute; border: 4px solid #ed1c24; border-radius: 2px; }
.mark-total { left: 178px; top: 264px; width: 371px; height: 25px; }
.mark-refund { left: 67px; top: 600px; width: 1086px; height: 123px; }
.mark-owe { left: 68px; top: 726px; width: 1085px; height: 69px; }
.badge { position: absolute; width: 50px; height: 50px; border-radius: 50%; background: #ed1c24; color: #fff; font: bold 32px/50px "Open Sans", sans-serif; text-align: center; }
.badge-1 { left: 93px; top: 229px; }
.badge-2 { left: -10px; top: 578px; }

/* status bar */
.statusbar { flex: none; display: flex; align-items: center; height: 58px; border-top: 2px solid #c8c8c8; padding: 0 43px 0 44px; background: #efefef; }
.next-view { margin-left: 28px; }
.paper { margin-left: 57px; color: #5f6361; }
.page-nav { display: flex; align-items: center; gap: 33px; margin-left: auto; color: #5f6361; }
.page-nav svg { width: 26px; height: 32px; }
.page-box.wide { width: 216px; margin: 0 -9px; }
.fits { display: flex; gap: 28px; height: 36px; margin-left: 149px; padding: 0 18px 0 19px; border: solid #dcdcdc; border-width: 0 1px; }
.views { display: flex; gap: 10px; margin-left: 13px; padding-right: 5px; border-right: 1px solid #dcdcdc; }
.scale { display: flex; align-items: center; margin-left: 29px; color: #5f6361; }
.flat select { width: 86px; border: none; padding: 0 32px 0 0; background: none; text-align-last: left; }
.flat .caret { right: 2px; width: 17px; height: 12px; opacity: 1; }
.flat { margin-right: 30px; }
.slider { appearance: none; width: 180px; height: 24px; margin: 0 22px; background: none; }
.slider::-webkit-slider-runnable-track { height: 6px; background: linear-gradient(to right, #5f6361 37%, #cbcbc9 37%); }
.slider::-webkit-slider-thumb { appearance: none; width: 20px; height: 22px; margin-top: -8px; border: 2px solid #5f6361; border-radius: 50%; background: #fff; }
.full { margin-left: 32px; }
.full svg { width: 32px; height: 32px; }
```
